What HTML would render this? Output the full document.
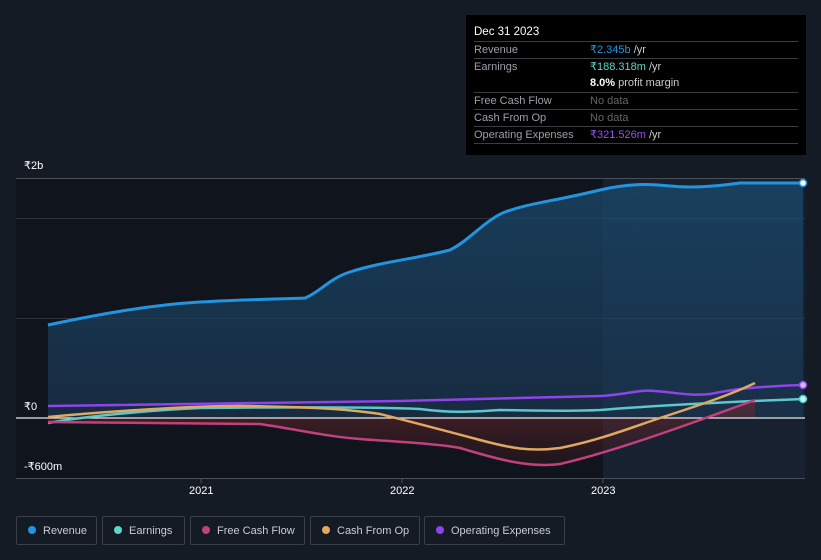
<!DOCTYPE html>
<html><head><meta charset="utf-8"><style>
html,body{margin:0;padding:0;background:#151b24;width:821px;height:560px;overflow:hidden;font-family:"Liberation Sans",sans-serif;}
.tip{position:absolute;left:466px;top:15px;width:340px;height:140px;background:#000;color:#fff;font-size:11px;}
.tip .h{position:absolute;left:8px;top:11px;font-size:11.5px;}
.row{position:absolute;left:8px;width:324px;border-top:1px solid #3a3d44;height:17px;line-height:17px;color:#9aa0a8;}
.row span.v{position:absolute;left:116px;}
.leg{position:absolute;top:516px;height:29px;border:1px solid #3a3f48;border-radius:2px;color:#c9ccd1;font-size:11px;line-height:29px;box-sizing:border-box;white-space:nowrap;}
.leg i{display:inline-block;width:8px;height:8px;border-radius:50%;margin:0 7px 0 11px;vertical-align:0px;}
.ax{position:absolute;color:#fff;font-size:11px;}
</style></head><body>
<svg width="821" height="560" style="position:absolute;left:0;top:0">
<defs>
<linearGradient id="rg" x1="0" y1="0" x2="0" y2="1"><stop offset="0" stop-color="#1a4a6e" stop-opacity=".75"/><stop offset="1" stop-color="#1a3550" stop-opacity=".7"/></linearGradient>
<linearGradient id="ng" x1="0" y1="0" x2="0" y2="1"><stop offset="0" stop-color="#7a2a30" stop-opacity=".8"/><stop offset="1" stop-color="#3a1a20" stop-opacity=".5"/></linearGradient>
</defs>
<rect x="16" y="178" width="789" height="300" fill="#10141c"/>
<rect x="603" y="178" width="202" height="300" fill="#172130"/>
<line x1="16" y1="178.5" x2="805" y2="178.5" stroke="#4a4f57"/>
<line x1="16" y1="218.5" x2="805" y2="218.5" stroke="#2e333b"/>
<line x1="16" y1="318.5" x2="805" y2="318.5" stroke="#2e333b"/>
<path d="M48,325 C100,314 150,305 200,302 C250,299 290,299 305,298 C320,292 330,278 350,272 C380,262 420,258 450,250 C470,240 485,220 505,212 C530,203 550,202 600,190 C630,183 650,184 670,186 C690,188 710,187 740,183 L803,183 L803,418 L48,418Z" fill="url(#rg)"/>
<path d="M48,422 C150,423 255,424 260,424 C300,430 330,437 360,439 C400,442 440,444 460,448 C500,460 530,468 560,464 C600,455 650,438 700,420 L755,400 L755,418 L48,418Z" fill="url(#ng)" opacity=".7"/>
<path d="M48,325 C100,314 150,305 200,302 C250,299 290,299 305,298 C320,292 330,278 350,272 C380,262 420,258 450,250 C470,240 485,220 505,212 C530,203 550,202 600,190 C630,183 650,184 670,186 C690,188 710,187 740,183 L803,183" fill="none" stroke="#2394df" stroke-width="3"/>
<line x1="16" y1="418" x2="805" y2="418" stroke="#e8e8e8" stroke-width="1.2"/>
<line x1="16" y1="478.5" x2="805" y2="478.5" stroke="#4a4f57"/>
<path d="M48,406 C200,404 350,402 400,401 C500,398 560,397 600,396 C625,395 640,389 655,391 C680,393 690,396 710,394 C730,390 745,387 803,385" fill="none" stroke="#8e44e8" stroke-width="2.5"/>
<path d="M48,423 C80,417 150,410 200,408 C300,407 380,407 420,409 C450,413 470,412 500,410 C550,411 580,411 600,410 C650,406 700,403 803,399" fill="none" stroke="#5cc7cc" stroke-width="2.5"/>
<path d="M48,422 C150,423 255,424 260,424 C300,430 330,437 360,439 C400,442 440,444 460,448 C500,460 530,468 560,464 C600,455 650,438 700,420 L755,400" fill="none" stroke="#c2417c" stroke-width="2.5"/>
<path d="M48,417 C100,412 200,405 250,406 C300,407 340,408 380,414 C420,424 450,432 480,440 C510,448 530,452 560,448 C600,440 630,428 660,418 C700,405 730,395 755,383" fill="none" stroke="#e0a862" stroke-width="2.5"/>
<circle cx="803" cy="183" r="3.5" fill="#fff" stroke="#2394df" stroke-width="1.5"/>
<circle cx="803" cy="385" r="3.5" fill="#d9b8ff" stroke="#8e44e8" stroke-width="1.5"/>
<circle cx="803" cy="399" r="3.5" fill="#bff" stroke="#5cc7cc" stroke-width="1.5"/>
<line x1="201" y1="478" x2="201" y2="483" stroke="#4a4f57"/><line x1="402" y1="478" x2="402" y2="483" stroke="#4a4f57"/><line x1="603" y1="478" x2="603" y2="483" stroke="#4a4f57"/>
</svg>
<div class="ax" style="left:24px;top:159px">₹2b</div>
<div class="ax" style="left:24px;top:400px">₹0</div>
<div class="ax" style="left:24px;top:460px">-₹600m</div>
<div class="ax" style="left:189px;top:485px">2021</div>
<div class="ax" style="left:390px;top:485px">2022</div>
<div class="ax" style="left:591px;top:485px">2023</div>
<div class="tip">
<div class="h">Dec 31 2023</div>
<div class="row" style="top:26px">Revenue<span class="v"><span style="color:#2394df">₹2.345b</span> <span style="color:#ccc">/yr</span></span></div>
<div class="row" style="top:43px">Earnings<span class="v"><span style="color:#5cd6c8">₹188.318m</span> <span style="color:#ccc">/yr</span></span></div>
<div class="row" style="top:60px;border-top:none"><span class="v"><b style="color:#fff">8.0%</b> <span style="color:#ccc">profit margin</span></span></div>
<div class="row" style="top:77px">Free Cash Flow<span class="v" style="color:#666">No data</span></div>
<div class="row" style="top:94px">Cash From Op<span class="v" style="color:#666">No data</span></div>
<div class="row" style="top:111px">Operating Expenses<span class="v"><span style="color:#9b4ff0">₹321.526m</span> <span style="color:#ccc">/yr</span></span></div>
<div class="row" style="top:128px;height:0"></div>
</div>
<div class="leg" style="left:16px;width:81px"><i style="background:#2394df"></i>Revenue</div>
<div class="leg" style="left:102px;width:83px"><i style="background:#5cd6c8"></i>Earnings</div>
<div class="leg" style="left:190px;width:115px"><i style="background:#c2417c"></i>Free Cash Flow</div>
<div class="leg" style="left:310px;width:110px"><i style="background:#e0a862"></i>Cash From Op</div>
<div class="leg" style="left:424px;width:141px"><i style="background:#8e44e8"></i>Operating Expenses</div>
</body></html>
